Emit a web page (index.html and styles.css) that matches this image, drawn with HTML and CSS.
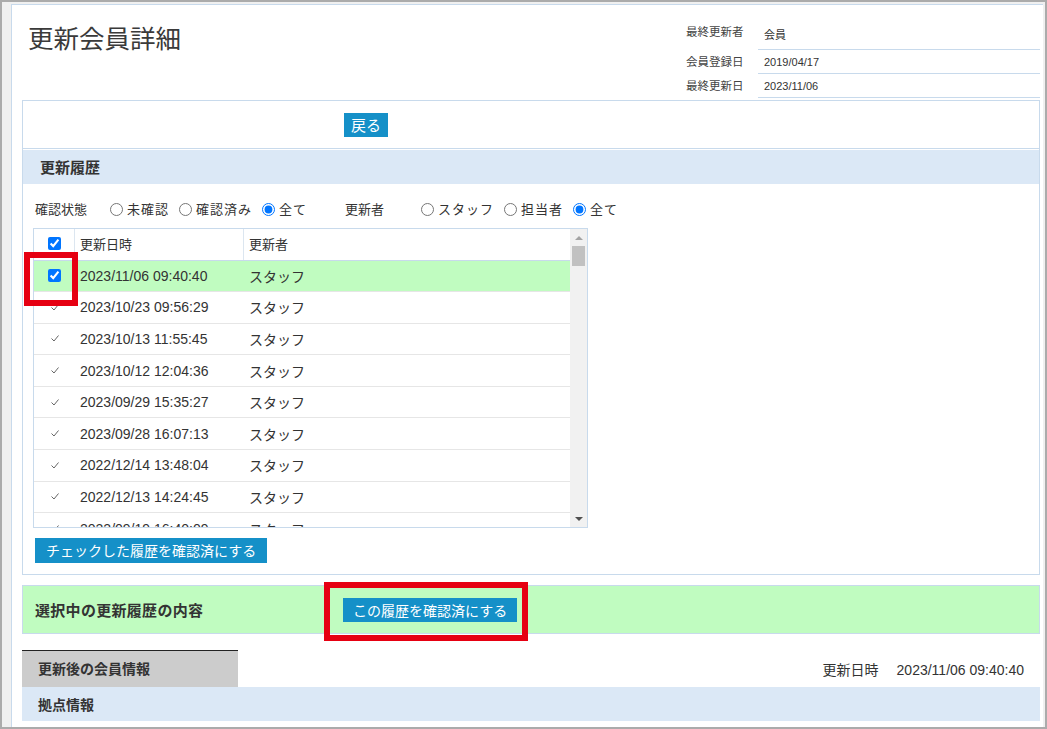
FILE: index.html
```html
<!DOCTYPE html>
<html lang="ja">
<head>
    <meta charset="UTF-8">
    <meta name="viewport" content="width=device-width, initial-scale=1.0">
    <title>更新会員詳細</title>
    <link rel="stylesheet" href="styles.css">
</head>
<body>
<div class="frame">
    <div class="page">
        <div class="head">
            <h1>更新会員詳細</h1>
            <div class="meta">
                <div class="meta-label first">最終更新者</div>
                <div class="meta-value first">会員</div>
                <div class="meta-label">会員登録日</div>
                <div class="meta-value">2019/04/17</div>
                <div class="meta-label">最終更新日</div>
                <div class="meta-value">2023/11/06</div>
            </div>
        </div>

        <div class="panel">
            <div class="btnbar"><button class="btn back">戻る</button></div>
            <h2 class="bar">更新履歴</h2>

            <div class="filters">
                <span class="filter-name">確認状態</span>
                <label class="opt first"><input type="radio" name="status">未確認</label>
                <label class="opt"><input type="radio" name="status">確認済み</label>
                <label class="opt"><input type="radio" name="status" checked>全て</label>
                <span class="filter-name second">更新者</span>
                <label class="opt first wide-gap"><input type="radio" name="who">スタッフ</label>
                <label class="opt"><input type="radio" name="who">担当者</label>
                <label class="opt"><input type="radio" name="who" checked>全て</label>
            </div>

            <div class="listbox">
                <div class="list">
                    <div class="row head-row">
                        <div class="c1"><input type="checkbox" checked></div>
                        <div class="c2">更新日時</div>
                        <div class="c3">更新者</div>
                    </div>
                    <div class="row current">
                        <div class="c1"><input type="checkbox" checked></div>
                        <div class="c2">2023/11/06 09:40:40</div>
                        <div class="c3">スタッフ</div>
                    </div>
                    <div class="row">
                        <div class="c1"><svg class="tick" width="8" height="7" viewBox="0 0 8 7"><polyline points="0.5,3.5 3,6 7.5,0.5"/></svg></div>
                        <div class="c2">2023/10/23 09:56:29</div>
                        <div class="c3">スタッフ</div>
                    </div>
                    <div class="row">
                        <div class="c1"><svg class="tick" width="8" height="7" viewBox="0 0 8 7"><polyline points="0.5,3.5 3,6 7.5,0.5"/></svg></div>
                        <div class="c2">2023/10/13 11:55:45</div>
                        <div class="c3">スタッフ</div>
                    </div>
                    <div class="row">
                        <div class="c1"><svg class="tick" width="8" height="7" viewBox="0 0 8 7"><polyline points="0.5,3.5 3,6 7.5,0.5"/></svg></div>
                        <div class="c2">2023/10/12 12:04:36</div>
                        <div class="c3">スタッフ</div>
                    </div>
                    <div class="row">
                        <div class="c1"><svg class="tick" width="8" height="7" viewBox="0 0 8 7"><polyline points="0.5,3.5 3,6 7.5,0.5"/></svg></div>
                        <div class="c2">2023/09/29 15:35:27</div>
                        <div class="c3">スタッフ</div>
                    </div>
                    <div class="row">
                        <div class="c1"><svg class="tick" width="8" height="7" viewBox="0 0 8 7"><polyline points="0.5,3.5 3,6 7.5,0.5"/></svg></div>
                        <div class="c2">2023/09/28 16:07:13</div>
                        <div class="c3">スタッフ</div>
                    </div>
                    <div class="row">
                        <div class="c1"><svg class="tick" width="8" height="7" viewBox="0 0 8 7"><polyline points="0.5,3.5 3,6 7.5,0.5"/></svg></div>
                        <div class="c2">2022/12/14 13:48:04</div>
                        <div class="c3">スタッフ</div>
                    </div>
                    <div class="row">
                        <div class="c1"><svg class="tick" width="8" height="7" viewBox="0 0 8 7"><polyline points="0.5,3.5 3,6 7.5,0.5"/></svg></div>
                        <div class="c2">2022/12/13 14:24:45</div>
                        <div class="c3">スタッフ</div>
                    </div>
                    <div class="row">
                        <div class="c1"><svg class="tick" width="8" height="7" viewBox="0 0 8 7"><polyline points="0.5,3.5 3,6 7.5,0.5"/></svg></div>
                        <div class="c2">2022/09/19 16:40:09</div>
                        <div class="c3">スタッフ</div>
                    </div>
                </div>
                <div class="scrollbar">
                    <div class="sb-btn"><span class="arrow-up"></span></div>
                    <div class="sb-thumb"></div>
                    <div class="sb-space"></div>
                    <div class="sb-btn"><span class="arrow-down"></span></div>
                </div>
                <span class="mark mark-row"></span>
            </div>

            <button class="btn wide">チェックした履歴を確認済にする</button>
        </div>

        <div class="selected">
            <span class="sel-title">選択中の更新履歴の内容</span>
            <span class="marked">
                <button class="btn confirm">この履歴を確認済にする</button>
                <span class="mark mark-btn"></span>
            </span>
        </div>

        <div class="tabs">
            <div class="tab">更新後の会員情報</div>
            <div class="stamp"><span>更新日時</span>2023/11/06 09:40:40</div>
        </div>
        <h3 class="bar sub">拠点情報</h3>
    </div>
</div>
</body>
</html>
```

FILE: styles.css
```css
* {
    box-sizing: border-box;
}
body {
    margin: 0;
    font-family: "Liberation Sans", "Noto Sans CJK JP", sans-serif;
    color: #333;
}
.frame {
    width: 1047px;
    height: 729px;
    border: 2px solid #ababab;
    background-color: #f0f0f0;
    padding: 2px 2px 0 9px;
    overflow: hidden;
}
.page {
    height: 100%;
    background-color: white;
    border-top: 1px solid #c8daec;
    border-left: 1px solid #c8daec;
    padding: 0 3px 0 10px;
}

/* cabecera */
.head {
    height: 95px;
    display: flex;
    justify-content: space-between;
    align-items: flex-start;
}
h1 {
    margin: 14px 0 0 6px;
    font-family: "Noto Sans CJK JP", sans-serif;
    font-size: 25.5px;
    font-weight: normal;
    line-height: 36px;
    color: #3a3a3a;
}
.meta {
    margin: 14px 0 0 0;
    display: grid;
    grid-template-columns: 72px 282px;
    grid-template-rows: 31px 24px 24px;
    font-size: 11px;
    line-height: 16px;
}
.meta-label {
    font-size: 11.5px;
    color: #444;
    padding-top: 4px;
}
.meta-label.first {
    padding-top: 5px;
}
.meta-value {
    border-bottom: 1px solid #c8daec;
    padding: 4px 0 0 6px;
}
.meta-value.first {
    padding-top: 8px;
}

/* botones */
.btn {
    display: block;
    border: none;
    background-color: #1590c8;
    color: white;
    font-family: "Noto Sans CJK JP", sans-serif;
    padding: 0;
    margin: 0;
}
.back {
    height: 24px;
    padding: 0 7px;
    font-size: 15px;
    line-height: 24px;
}
.wide {
    height: 25px;
    margin: 10px 0 0 12px;
    padding: 0 11px;
    font-size: 14px;
    line-height: 25px;
}
.confirm {
    height: 24px;
    padding: 0 10px;
    font-size: 14px;
    line-height: 24px;
}

/* panel historial */
.panel {
    border: 1px solid #c8daec;
    padding-bottom: 11px;
}
.btnbar {
    height: 48px;
    border-bottom: 1px solid #c8daec;
    padding: 12px 0 0 321px;
}
.bar {
    margin: 1px 0 0;
    height: 34px;
    background-color: #dbe8f6;
    font-family: "Noto Sans CJK JP", sans-serif;
    font-size: 15px;
    font-weight: bold;
    line-height: 34px;
    padding-left: 17px;
}
.bar.sub {
    margin: 0;
    font-size: 14px;
    padding-left: 16px;
}
.filters {
    display: flex;
    align-items: center;
    padding: 16px 0 0 12px;
    margin-bottom: 10px;
    font-family: "Noto Sans CJK JP", sans-serif;
    font-size: 13px;
    line-height: 18px;
}
.filter-name.second {
    margin-left: 38px;
}
.opt {
    display: flex;
    align-items: center;
    letter-spacing: 1px;
    margin-left: 10px;
}
.opt.first {
    margin-left: 23px;
}
.opt.wide-gap {
    margin-left: 37px;
}
.opt input {
    width: 13px;
    height: 13px;
    margin: 0 4px 0 0;
}

.listbox {
    position: relative;
    display: flex;
    margin-left: 10px;
    width: 555px;
    height: 300px;
    border: 1px solid #c8daec;
}
.list {
    flex: 1;
    overflow: hidden;
}
.row {
    display: flex;
    height: 31.6px;
    border-bottom: 1px solid #e6e6e6;
    font-size: 14px;
    align-items: stretch;
}
.row > div {
    display: flex;
    align-items: center;
}
.row .c1 {
    width: 41px;
    justify-content: center;
}
.row .c2 {
    width: 169px;
    padding-left: 5px;
}
.row .c3 {
    flex: 1;
    padding-left: 5px;
}
.row input {
    width: 13px;
    height: 13px;
    margin: 0;
}
.head-row {
    height: 31.5px;
    border-bottom: 1px solid #c8daec;
    font-size: 13px;
}
.head-row > div {
    padding-bottom: 2px;
}
.head-row .c1,
.head-row .c2 {
    border-right: 1px solid #dce6f0;
}
.current {
    background-color: #c0fcc0;
}
.tick polyline {
    fill: none;
    stroke: #666;
    stroke-width: 1;
}

.scrollbar {
    width: 17px;
    background-color: #f1f1f1;
    display: flex;
    flex-direction: column;
}
.sb-btn {
    height: 17px;
    display: flex;
    align-items: center;
    justify-content: center;
}
.arrow-up {
    border-left: 4px solid transparent;
    border-right: 4px solid transparent;
    border-bottom: 4px solid #a3a3a3;
}
.arrow-down {
    border-left: 4px solid transparent;
    border-right: 4px solid transparent;
    border-top: 4px solid #505050;
}
.sb-thumb {
    height: 20px;
    margin: 0 2px;
    background-color: #c1c1c1;
}
.sb-space {
    flex: 1;
}

/* marcas rojas */
.mark {
    position: absolute;
    border: 6px solid #e60012;
}
.mark-row {
    left: -10px;
    top: 23px;
    width: 54px;
    height: 54px;
}
.mark-btn {
    left: -19px;
    top: -16px;
    width: 204px;
    height: 59px;
}

/* contenido seleccionado */
.selected {
    margin-top: 10px;
    height: 49px;
    display: flex;
    align-items: center;
    background-color: #c0fcc0;
    border: 1px solid #c8daec;
}
.sel-title {
    width: 320px;
    padding-left: 12px;
    font-family: "Noto Sans CJK JP", sans-serif;
    font-size: 15px;
    font-weight: bold;
    letter-spacing: 0.3px;
}
.marked {
    position: relative;
    display: flex;
}
.tabs {
    margin-top: 16px;
    height: 37px;
    display: flex;
    justify-content: space-between;
}
.tab {
    width: 216px;
    background-color: #cccccc;
    border-top: 1px solid #222;
    padding-left: 16px;
    font-family: "Noto Sans CJK JP", sans-serif;
    font-size: 14px;
    font-weight: bold;
    line-height: 35px;
}
.stamp {
    align-self: center;
    padding-right: 16px;
    font-size: 14px;
}
.stamp span {
    margin-right: 18px;
}
```
